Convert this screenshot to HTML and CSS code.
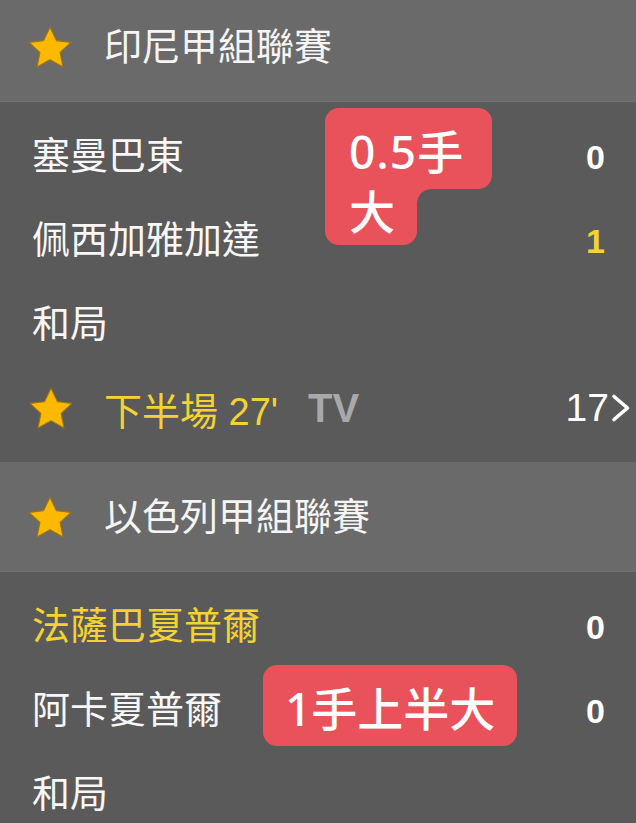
FILE: index.html
```html
<!DOCTYPE html>
<html lang="zh-Hant">
<head>
<meta charset="utf-8">
<title>賽事列表</title>
<link rel="stylesheet" href="styles.css">
</head>
<body>
<div class="page">
  <section class="league">
    <header class="league-head">
      <svg class="star" viewBox="2 2 20 19" width="44" height="42"><path d="M12 2.5l2.9 6.1 6.6.8-4.9 4.6 1.3 6.6L12 17.3l-5.9 3.3 1.3-6.6-4.9-4.6 6.6-.8z"/></svg>
      <span class="league-name">印尼甲組聯賽</span>
    </header>
    <div class="match">
      <div class="row"><span class="team">塞曼巴東</span><span class="score">0</span></div>
      <div class="row"><span class="team">佩西加雅加達</span><span class="score lead">1</span></div>
      <div class="row"><span class="team">和局</span></div>
      <div class="row status">
        <svg class="star" viewBox="2 2 20 19" width="44" height="42"><path d="M12 2.5l2.9 6.1 6.6.8-4.9 4.6 1.3 6.6L12 17.3l-5.9 3.3 1.3-6.6-4.9-4.6 6.6-.8z"/></svg>
        <span class="time">下半場 27'</span>
        <span class="tv">TV</span>
        <span class="more">17<svg class="chev" viewBox="0 0 22 30" width="22" height="30"><path d="M4 3.5L17.5 15L4 26.5"/></svg></span>
      </div>
      <div class="badge badge-split">
        <div class="badge-top">0.5手</div>
        <div class="badge-bottom">大</div>
      </div>
    </div>
  </section>
  <section class="league">
    <header class="league-head">
      <svg class="star" viewBox="2 2 20 19" width="44" height="42"><path d="M12 2.5l2.9 6.1 6.6.8-4.9 4.6 1.3 6.6L12 17.3l-5.9 3.3 1.3-6.6-4.9-4.6 6.6-.8z"/></svg>
      <span class="league-name">以色列甲組聯賽</span>
    </header>
    <div class="match">
      <div class="row"><span class="team lead">法薩巴夏普爾</span><span class="score">0</span></div>
      <div class="row"><span class="team">阿卡夏普爾</span><span class="score">0</span></div>
      <div class="row"><span class="team">和局</span></div>
      <div class="badge badge-single">1手上半大</div>
    </div>
  </section>
</div>
</body>
</html>
```
FILE: styles.css
```css
html, body {
  margin: 0;
  padding: 0;
  background: #5a5a5a;
}
body {
  font-family: "Liberation Sans", "Noto Sans CJK TC", sans-serif;
  color: #f7f7f7;
  overflow: hidden;
}
.page {
  margin-top: -8px;
}
.league-head {
  height: 110px;
  box-sizing: border-box;
  display: flex;
  align-items: center;
  gap: 32px;
  padding-left: 28px;
  background: #6a6a6a;
  border-bottom: 1px solid #707070;
}
.star {
  flex: none;
  display: block;
}
.star path {
  fill: #fcb900;
  stroke: #9c7512;
  stroke-width: 0.5;
  stroke-linejoin: round;
}
.league-name {
  font-size: 38px;
  line-height: 1;
  color: #f5f5f5;
}
.match {
  position: relative;
  padding: 12px 0 12px;
}
.row {
  height: 84px;
  display: flex;
  align-items: center;
  justify-content: space-between;
  padding: 0 31px 0 32px;
}
.team {
  font-size: 38px;
  line-height: 1;
}
.team.lead {
  color: #f3d232;
}
.score {
  font-size: 34px;
  font-weight: bold;
  color: #ffffff;
  padding-top: 3px;
}
.score.lead {
  color: #f3d232;
}
.row.status {
  justify-content: flex-start;
  padding-left: 29px;
  padding-right: 4px;
}
.time {
  margin-left: 31px;
  font-size: 38px;
  color: #f3d232;
}
.tv {
  margin-left: 30px;
  font-size: 40px;
  font-weight: bold;
  color: #a9a9a9;
}
.more {
  margin-left: auto;
  display: flex;
  align-items: center;
  gap: 1px;
  font-size: 39px;
  color: #ffffff;
}
.chev path {
  fill: none;
  stroke: #ffffff;
  stroke-width: 3.6;
  stroke-linecap: round;
  stroke-linejoin: round;
}
.badge {
  position: absolute;
  font-family: "Noto Sans", "Noto Sans CJK TC", sans-serif;
  font-size: 46px;
  font-weight: 500;
  color: #ffffff;
}
.badge-split {
  left: 325px;
  top: 6px;
}
.badge-top {
  width: 167px;
  height: 81px;
  box-sizing: border-box;
  padding-left: 24px;
  display: flex;
  align-items: center;
  background: #e9525a;
  border-radius: 14px 14px 14px 0;
  white-space: nowrap;
  letter-spacing: 1px;
}
.badge-bottom {
  position: relative;
  width: 92px;
  height: 56px;
  box-sizing: border-box;
  padding-left: 24px;
  line-height: 44px;
  background: #e9525a;
  border-radius: 0 0 14px 14px;
}
.badge-bottom::after {
  content: "";
  position: absolute;
  left: 92px;
  top: 0;
  width: 14px;
  height: 14px;
  background: radial-gradient(circle at 100% 100%, transparent 13.5px, #e9525a 14px);
}
.badge-single {
  left: 263px;
  top: 93px;
  width: 254px;
  height: 81px;
  box-sizing: border-box;
  padding-left: 22px;
  display: flex;
  align-items: center;
  background: #e9525a;
  border-radius: 14px;
  white-space: nowrap;
}
```
